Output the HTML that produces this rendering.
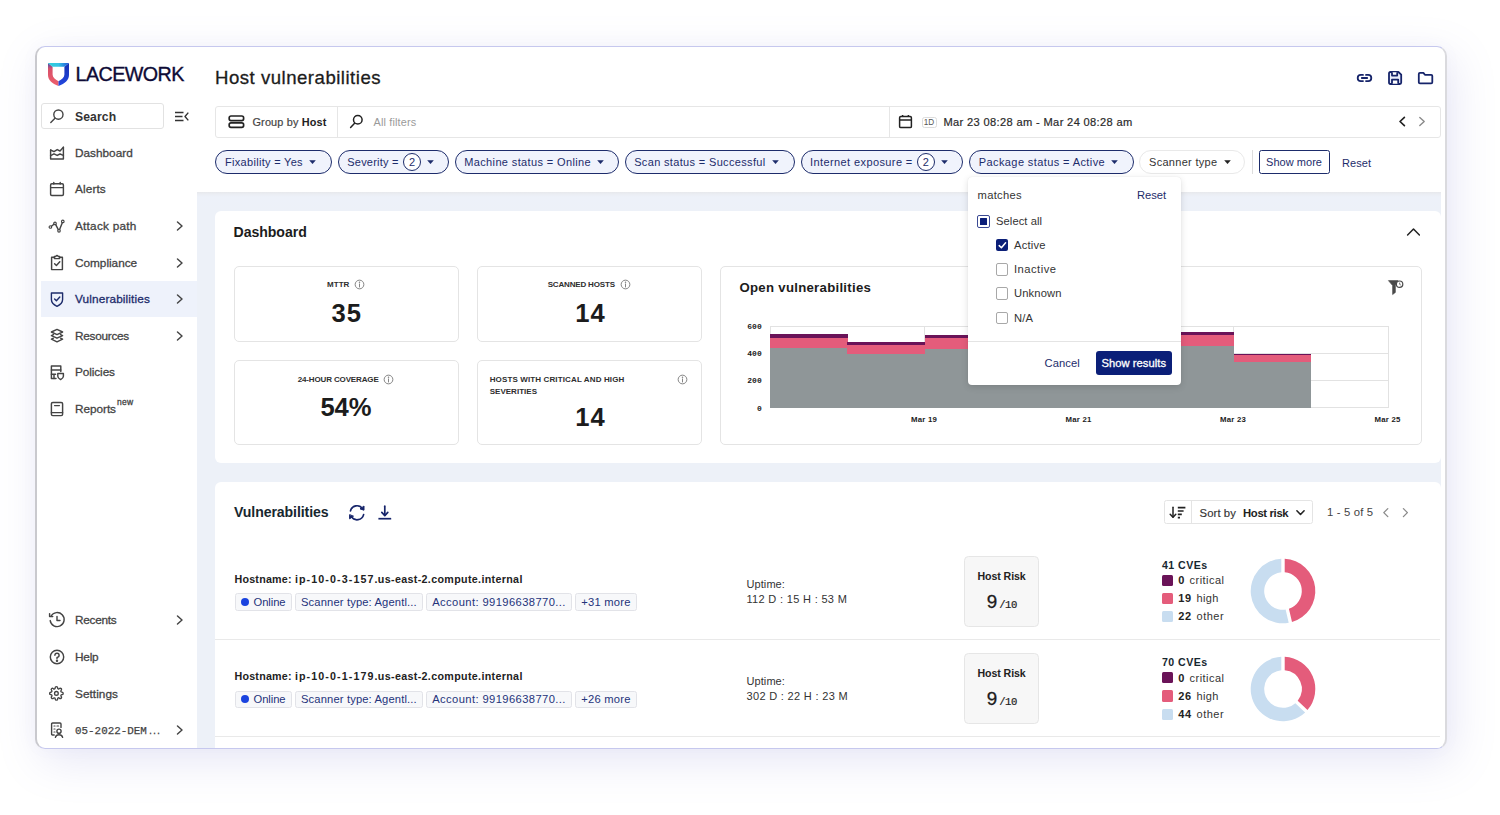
<!DOCTYPE html>
<html lang="en">
<head>
<meta charset="utf-8">
<title>Host vulnerabilities</title>
<style>
*{box-sizing:border-box;margin:0;padding:0}
html,body{width:1500px;height:815px;overflow:hidden;background:#fff}
body{font-family:"Liberation Sans",sans-serif;color:#222;position:relative;-webkit-font-smoothing:antialiased}
.abs{position:absolute}
.t{position:absolute;white-space:nowrap;line-height:1}
#frame{position:absolute;left:35px;top:46px;width:1412px;height:703px;border:1px solid #c6c8ee;border-left:2px solid #c9c9ce;border-right:2px solid #dadade;border-radius:10px;background:#fff;box-shadow:6px 12px 44px rgba(125,130,205,.19),0 0 16px rgba(125,130,205,.04);overflow:hidden}
/* everything inside frame is positioned in page coords via inner offset */
#in{position:absolute;left:-37px;top:-47px;width:1500px;height:815px}
#mainbg{left:197px;top:192px;width:1243.5px;height:560px;background:linear-gradient(to bottom,#e7e8ec 0,#ebeef4 2.5px,#edf1f9 5px,#edf1f8 20px)}
.card{position:absolute;background:#fff;border-radius:6px}
.box{position:absolute;border:1px solid #e4e4e4;border-radius:5px;background:#fff}
.nav{position:absolute;left:75px;font-size:11.8px;color:#444;-webkit-text-stroke:.3px #444;white-space:nowrap;line-height:14px;letter-spacing:.05px}
.chip{position:absolute;top:150px;height:24px;border:1px solid #1d2c6b;border-radius:12px;background:#f0f3fc;color:#1d2c6b;font-size:11px;line-height:22px;white-space:nowrap;letter-spacing:.3px}
.ico{position:absolute;overflow:visible}
</style>
</head>
<body>
<div id="frame"><div id="in">
<!-- SIDEBAR -->
<div id="sidebar">
<!-- logo -->
<svg class="ico" style="left:47px;top:62px" width="23" height="25" viewBox="0 0 23 25">
<defs>
<linearGradient id="lgL" x1="0" y1="0" x2="0" y2="1"><stop offset="0" stop-color="#3a4fb5"/><stop offset=".25" stop-color="#d8506a"/><stop offset="1" stop-color="#ee5f6c"/></linearGradient>
<linearGradient id="lgT" x1="0" y1="0" x2="1" y2="0"><stop offset="0" stop-color="#2fd0d8"/><stop offset=".5" stop-color="#35c3e6"/><stop offset="1" stop-color="#1f55d8"/></linearGradient>
<linearGradient id="lgR" x1="0" y1="0" x2="0" y2="1"><stop offset="0" stop-color="#1630b0"/><stop offset="1" stop-color="#2348e0"/></linearGradient>
</defs>
<path d="M1 1 L5.6 4.7 L5.6 12.6 C5.6 15.6 8 17.6 11.5 19.2 L11.5 24 C5 21.5 1 18 1 13 Z" fill="url(#lgL)"/>
<path d="M22 1 L17.4 4.7 L17.4 12.6 C17.4 15.6 15 17.6 11.5 19.2 L11.5 24 C18 21.5 22 18 22 13 Z" fill="url(#lgR)"/>
<path d="M1 1 L22 1 L17.4 4.7 L5.6 4.7 Z" fill="url(#lgT)"/>
</svg>
<div class="t" style="left:75.5px;top:64px;font-size:19.7px;letter-spacing:-.55px;color:#0e0b36;-webkit-text-stroke:.35px #0e0b36;line-height:20px">LACEWORK</div>
<!-- search -->
<div class="abs" style="left:41px;top:103px;width:123px;height:26px;border:1px solid #e2e2e2;border-radius:3px;background:#fff"></div>
<svg class="ico" style="left:49px;top:108px" width="16" height="16" viewBox="0 0 16 16" fill="none" stroke="#444" stroke-width="1.4" stroke-linecap="round"><circle cx="9.4" cy="6.6" r="4.6"/><path d="M6 10.2 L1.8 14.4"/></svg>
<div class="t" style="left:75px;top:110px;font-size:12.2px;font-weight:bold;color:#333;letter-spacing:.1px;line-height:14px">Search</div>
<svg class="ico" style="left:174px;top:111px" width="16" height="11" viewBox="0 0 16 11" fill="none" stroke="#333" stroke-width="1.4"><path d="M1 1.5 H9.5 M1 5.5 H8.5 M1 9.5 H9.5"/><path d="M14.3 1.6 L11 5.5 L14.3 9.4" stroke-linejoin="round"/></svg>
<!-- active bg -->
<div class="abs" style="left:41px;top:281px;width:156px;height:36px;background:#eef2fb"></div>
<!-- nav labels -->
<div class="nav" id="nav0" style="top:146px;letter-spacing:-0.0px">Dashboard</div>
<div class="nav" id="nav1" style="top:182px;letter-spacing:0.11px">Alerts</div>
<div class="nav" id="nav2" style="top:219px;letter-spacing:0.23px">Attack path</div>
<div class="nav" id="nav3" style="top:256px;letter-spacing:-0.02px">Compliance</div>
<div class="nav" id="nav4" style="top:292px;color:#1d2c6b;-webkit-text-stroke:.3px #1d2c6b;letter-spacing:0.13px">Vulnerabilities</div>
<div class="nav" id="nav5" style="top:329px;letter-spacing:-0.27px">Resources</div>
<div class="nav" id="nav6" style="top:365px;letter-spacing:-0.09px">Policies</div>
<div class="nav" style="top:402px"><span id="nav7" style="letter-spacing:-0.05px">Reports</span><span style="font-size:8.5px;position:relative;top:-8px;left:1px;letter-spacing:.3px">new</span></div>
<div class="nav" id="nav8" style="top:613px;letter-spacing:-0.27px">Recents</div>
<div class="nav" id="nav9" style="top:650px;letter-spacing:-0.22px">Help</div>
<div class="nav" id="nav10" style="top:687px;letter-spacing:.05px">Settings</div>
<div class="nav" id="acct" style="top:723px;font-family:'Liberation Mono',monospace;font-size:10.9px;letter-spacing:0px;-webkit-text-stroke:.25px #444">05-2022-DEM<span style="font-family:'Liberation Sans',sans-serif;letter-spacing:1px;margin-left:2px">...</span></div>
<!-- chevrons -->
<svg class="ico" style="left:176px;top:221px" width="8" height="10" viewBox="0 0 8 10" fill="none" stroke="#444" stroke-width="1.5" stroke-linecap="round" stroke-linejoin="round"><path d="M1.5 1 L6 5 L1.5 9"/></svg>
<svg class="ico" style="left:176px;top:257.5px" width="8" height="10" viewBox="0 0 8 10" fill="none" stroke="#444" stroke-width="1.5" stroke-linecap="round" stroke-linejoin="round"><path d="M1.5 1 L6 5 L1.5 9"/></svg>
<svg class="ico" style="left:176px;top:294px" width="8" height="10" viewBox="0 0 8 10" fill="none" stroke="#444" stroke-width="1.5" stroke-linecap="round" stroke-linejoin="round"><path d="M1.5 1 L6 5 L1.5 9"/></svg>
<svg class="ico" style="left:176px;top:330.5px" width="8" height="10" viewBox="0 0 8 10" fill="none" stroke="#444" stroke-width="1.5" stroke-linecap="round" stroke-linejoin="round"><path d="M1.5 1 L6 5 L1.5 9"/></svg>
<svg class="ico" style="left:176px;top:615px" width="8" height="10" viewBox="0 0 8 10" fill="none" stroke="#444" stroke-width="1.5" stroke-linecap="round" stroke-linejoin="round"><path d="M1.5 1 L6 5 L1.5 9"/></svg>
<svg class="ico" style="left:176px;top:724.5px" width="8" height="10" viewBox="0 0 8 10" fill="none" stroke="#444" stroke-width="1.5" stroke-linecap="round" stroke-linejoin="round"><path d="M1.5 1 L6 5 L1.5 9"/></svg>

<!-- nav icons -->

<svg class="ico" style="left:49px;top:145px" width="16" height="16" viewBox="0 0 16 16" fill="none" stroke="#444" stroke-width="1.45" stroke-linecap="round" stroke-linejoin="round"><path d="M1.6 5 V14 H14.4 V2.2"/><path d="M1.6 5 L5 6.6 L8.2 4.6 L11 6 L14.4 2.2"/><path d="M1.6 10.6 L5 8.8 L8.2 10.4 L11 9 L14.4 10.4"/></svg>
<svg class="ico" style="left:49px;top:181px" width="16" height="16" viewBox="0 0 16 16" fill="none" stroke="#444" stroke-width="1.45" stroke-linecap="round" stroke-linejoin="round"><rect x="1.6" y="2.8" width="12.8" height="11.6" rx="1.2"/><path d="M1.6 6.6 H14.4 M4.8 1.4 V3 M11.2 1.4 V3"/></svg>
<svg class="ico" style="left:48px;top:218px" width="18" height="16" viewBox="0 0 18 16" fill="none" stroke="#444" stroke-width="1.45" stroke-linecap="round" stroke-linejoin="round"><circle cx="2.4" cy="9" r="1.3" stroke-width="1.1"/><circle cx="7" cy="5.4" r="1.3" stroke-width="1.1"/><circle cx="11" cy="12.8" r="1.3" stroke-width="1.1"/><circle cx="14.8" cy="3.4" r="1.3" stroke-width="1.1"/><path d="M3.5 8.2 L5.9 6.2 M7.7 6.6 L10.3 11.6 M11.6 11.6 L14.3 4.7"/></svg>
<svg class="ico" style="left:49px;top:254px" width="16" height="17" viewBox="0 0 16 17" fill="none" stroke="#444" stroke-width="1.45" stroke-linecap="round" stroke-linejoin="round"><path d="M5.4 3.2 H2.6 V15.6 H13.4 V3.2 H10.6"/><path d="M5.4 4.6 V2.4 H6.8 Q8 0.4 9.2 2.4 H10.6 V4.6 Z"/><path d="M5.6 9.8 L7.4 11.6 L10.8 7.8"/></svg>
<svg class="ico" style="left:49px;top:291px" width="16" height="17" viewBox="0 0 16 17" fill="none" stroke="#1d2c6b" stroke-width="1.4" stroke-linecap="round" stroke-linejoin="round"><path d="M2.4 2 H13.6 V8.6 C13.6 12 11 14 8 15.4 C5 14 2.4 12 2.4 8.6 Z"/><path d="M5.6 8 L7.4 9.8 L10.8 6"/></svg>
<svg class="ico" style="left:49px;top:328px" width="16" height="16" viewBox="0 0 16 16" fill="none" stroke="#444" stroke-width="1.45" stroke-linecap="round" stroke-linejoin="round"><path d="M8 1.4 L13.6 4 L8 6.6 L2.4 4 Z"/><path d="M4.4 6.6 L2.4 7.6 L8 10.2 L13.6 7.6 L11.6 6.6"/><path d="M4.4 10.2 L2.4 11.2 L8 13.8 L13.6 11.2 L11.6 10.2"/></svg>
<svg class="ico" style="left:49px;top:364px" width="16" height="17" viewBox="0 0 16 17" fill="none" stroke="#444" stroke-width="1.45" stroke-linecap="round" stroke-linejoin="round"><path d="M7 14.4 H2.4 V2 H11.8 V7.4"/><path d="M2.4 6 H11.8 M2.4 10.2 H6.6 M5 10.2 V14.4"/><path d="M8.8 9.4 H14.4 V12.2 C14.4 13.8 13 14.8 11.6 15.6 C10.2 14.8 8.8 13.8 8.8 12.2 Z"/></svg>
<svg class="ico" style="left:49px;top:401px" width="16" height="16" viewBox="0 0 16 16" fill="none" stroke="#444" stroke-width="1.45" stroke-linecap="round" stroke-linejoin="round"><rect x="2.4" y="1.4" width="11.2" height="13.2" rx="1.4"/><path d="M2.4 11.6 H13.6 M5.6 4.6 H10.4"/></svg>
<svg class="ico" style="left:48px;top:611px" width="18" height="18" viewBox="0 0 18 18" fill="none" stroke="#444" stroke-width="1.45" stroke-linecap="round" stroke-linejoin="round"><path d="M3 5.2 A7 7 0 1 1 2.2 9.6"/><path d="M1.6 2.6 V5.6 H4.8"/><path d="M9 5.4 V9.4 H12"/></svg>
<svg class="ico" style="left:48px;top:648px" width="18" height="18" viewBox="0 0 18 18" fill="none" stroke="#444" stroke-width="1.45" stroke-linecap="round" stroke-linejoin="round"><circle cx="9" cy="9" r="6.7"/><path d="M6.9 7.2 A2.1 2.1 0 1 1 9 9.4 V10.6"/><circle cx="9" cy="12.8" r=".5" fill="#444"/></svg>
<svg class="ico" style="left:49.3px;top:686.2px" width="14.8" height="14.8" viewBox="0 0 24 24" fill="none" stroke="#444" stroke-width="2.2" stroke-linecap="round" stroke-linejoin="round"><circle cx="12" cy="12" r="3"/><path d="M19.4 15a1.65 1.65 0 0 0 .33 1.82l.06.06a2 2 0 1 1-2.83 2.83l-.06-.06a1.65 1.65 0 0 0-1.82-.33 1.65 1.65 0 0 0-1 1.51V21a2 2 0 0 1-4 0v-.09A1.65 1.65 0 0 0 9 19.4a1.65 1.65 0 0 0-1.82.33l-.06.06a2 2 0 1 1-2.83-2.83l.06-.06a1.65 1.65 0 0 0 .33-1.82 1.65 1.65 0 0 0-1.51-1H3a2 2 0 0 1 0-4h.09A1.65 1.65 0 0 0 4.6 9a1.65 1.65 0 0 0-.33-1.82l-.06-.06a2 2 0 1 1 2.83-2.83l.06.06a1.65 1.65 0 0 0 1.82.33H9a1.65 1.65 0 0 0 1-1.51V3a2 2 0 0 1 4 0v.09a1.65 1.65 0 0 0 1 1.51 1.65 1.65 0 0 0 1.82-.33l.06-.06a2 2 0 1 1 2.83 2.83l-.06.06a1.65 1.65 0 0 0-.33 1.82V9a1.65 1.65 0 0 0 1.51 1H21a2 2 0 0 1 0 4h-.09a1.65 1.65 0 0 0-1.51 1z"/></svg>
<svg class="ico" style="left:49px;top:721px" width="16" height="18" viewBox="0 0 16 18" fill="none" stroke="#444" stroke-width="1.4" stroke-linecap="round" stroke-linejoin="round"><path d="M5.2 14 H3.6 Q2.6 14 2.6 13 V3 Q2.6 2 3.6 2 H11 Q12 2 12 3 V6.4"/><path d="M5 5 H6 M8 5 H9.6 M5 8 H6 M5 11 H6" stroke-width="1.2"/><circle cx="10" cy="10.2" r="2.1"/><path d="M6.4 16.4 C7.2 12.8 12.8 12.8 13.6 16.4"/></svg>

</div>
<!-- HEADER -->
<div id="header">
<div class="t" id="title" style="left:215px;top:68px;font-size:18.6px;line-height:20px;color:#1c1c1c;-webkit-text-stroke:.3px #1c1c1c;letter-spacing:.5px">Host vulnerabilities</div>
<!-- top-right icons -->
<svg class="ico" style="left:1356.3px;top:72px" width="17" height="12" viewBox="0 0 17 12" fill="none" stroke="#16246a" stroke-width="1.8" stroke-linecap="round"><path d="M7 2.9 H4.8 A3.1 3.1 0 0 0 4.8 9.1 H7"/><path d="M10 2.9 H12.2 A3.1 3.1 0 0 1 12.2 9.1 H10"/><path d="M5.8 6 H11.2"/></svg>
<svg class="ico" style="left:1387px;top:70px" width="16" height="16" viewBox="0 0 16 16" fill="#e9ecfa" stroke="#16246a" stroke-width="1.8" stroke-linejoin="round"><path d="M3.4 2 H11.4 L14.2 4.6 V12.6 Q14.2 14 12.8 14 H3.4 Q2 14 2 12.6 V3.4 Q2 2 3.4 2 Z"/><path d="M5 2.2 V5.6 H10.2 V2.2" fill="#fff"/><path d="M5 13.8 V9.6 H11.2 V13.8" fill="#fff"/></svg>
<svg class="ico" style="left:1417px;top:71px" width="17" height="14" viewBox="0 0 17 14" fill="none" stroke="#16246a" stroke-width="1.8" stroke-linejoin="round"><path d="M1.8 3 Q1.8 1.9 2.9 1.9 H6.4 L7.9 3.8 H14.2 Q15.3 3.8 15.3 4.9 V11.2 Q15.3 12.3 14.2 12.3 H2.9 Q1.8 12.3 1.8 11.2 Z"/></svg>
<!-- filter bar -->
<div class="abs" style="left:215px;top:106px;width:1225.5px;height:31.5px;border:1px solid #e6e6e6;border-radius:3px;background:#fff"></div>
<div class="abs" style="left:337px;top:106px;width:1px;height:31px;background:#e6e6e6"></div>
<div class="abs" style="left:889px;top:106px;width:1px;height:31px;background:#e6e6e6"></div>
<svg class="ico" style="left:227.8px;top:115px" width="17" height="14" viewBox="0 0 17 14" fill="none" stroke="#222" stroke-width="1.7"><rect x="1.2" y="1" width="14.4" height="4.6" rx="1.8"/><rect x="1.2" y="7.8" width="14.4" height="4.6" rx="1.8"/></svg>
<div class="t" id="groupby" style="letter-spacing:0.15px;left:252.5px;top:115.5px;font-size:10.9px;line-height:13px;color:#444;-webkit-text-stroke:.2px #444">Group by <b style="color:#222;-webkit-text-stroke:0">Host</b></div>
<svg class="ico" style="left:349px;top:114px" width="15" height="15" viewBox="0 0 15 15" fill="none" stroke="#222" stroke-width="1.5" stroke-linecap="round"><circle cx="8.8" cy="5.8" r="4.3"/><path d="M5.6 9.2 L1.6 13.4"/></svg>
<div class="t" id="allf" style="left:373.5px;top:116px;font-size:10.9px;line-height:13px;color:#9a9a9a;letter-spacing:.15px">All filters</div>
<svg class="ico" style="left:898px;top:114px" width="15" height="15" viewBox="0 0 15 15" fill="none" stroke="#222" stroke-width="1.5" stroke-linejoin="round"><rect x="1.6" y="2.6" width="11.8" height="11" rx="1.2"/><path d="M1.6 6 H13.4 M4.6 1 V3 M10.4 1 V3"/></svg>
<div class="abs" style="left:921.5px;top:116.5px;width:15px;height:11px;border:1px solid #dcdcdc;border-radius:2.5px;font-size:8.2px;line-height:9.5px;text-align:center;color:#555;letter-spacing:0px">1D</div>
<div class="t" id="daterange" style="left:943.5px;top:115.6px;font-size:11.1px;line-height:13px;color:#2a2a2a;-webkit-text-stroke:.2px #2a2a2a;letter-spacing:.35px">Mar 23 08:28 am - Mar 24 08:28 am</div>
<svg class="ico" style="left:1398px;top:116px" width="8" height="11" viewBox="0 0 8 11" fill="none" stroke="#222" stroke-width="1.7" stroke-linecap="round" stroke-linejoin="round"><path d="M6.4 1.4 L2 5.5 L6.4 9.6"/></svg>
<svg class="ico" style="left:1418px;top:116px" width="8" height="11" viewBox="0 0 8 11" fill="none" stroke="#8a8a8a" stroke-width="1.4" stroke-linecap="round" stroke-linejoin="round"><path d="M1.8 1.4 L6.2 5.5 L1.8 9.6"/></svg>
<!-- chips -->
<div class="chip" style="left:215px;width:117px"><span class="t" id="c1" style="left:9.0px;top:5px;line-height:12px">Fixability = Yes</span></div><svg class="ico" style="left:309.2px;top:160px" width="7" height="4.5" viewBox="0 0 7 4.5"><path d="M0.7 0.5 H6.3 L3.5 3.8 Z" fill="#1d2c6b" stroke="#1d2c6b" stroke-width=".5" stroke-linejoin="round"/></svg>
<div class="chip" style="left:337.8px;width:111.2px"><span class="t" id="c2" style="letter-spacing:0.2px;left:8.5px;top:5px;line-height:12px">Severity =</span></div><svg class="ico" style="left:426.5px;top:160px" width="7" height="4.5" viewBox="0 0 7 4.5"><path d="M0.7 0.5 H6.3 L3.5 3.8 Z" fill="#1d2c6b" stroke="#1d2c6b" stroke-width=".5" stroke-linejoin="round"/></svg>
<div class="chip" style="left:454.7px;width:164px"><span class="t" id="c3" style="letter-spacing:0.37px;left:8.5px;top:5px;line-height:12px">Machine status = Online</span></div><svg class="ico" style="left:596.5px;top:160px" width="7" height="4.5" viewBox="0 0 7 4.5"><path d="M0.7 0.5 H6.3 L3.5 3.8 Z" fill="#1d2c6b" stroke="#1d2c6b" stroke-width=".5" stroke-linejoin="round"/></svg>
<div class="chip" style="left:624.7px;width:170px"><span class="t" id="c4" style="letter-spacing:0.34px;left:8.5px;top:5px;line-height:12px">Scan status = Successful</span></div><svg class="ico" style="left:772.0px;top:160px" width="7" height="4.5" viewBox="0 0 7 4.5"><path d="M0.7 0.5 H6.3 L3.5 3.8 Z" fill="#1d2c6b" stroke="#1d2c6b" stroke-width=".5" stroke-linejoin="round"/></svg>
<div class="chip" style="left:800.5px;width:162.3px"><span class="t" id="c5" style="letter-spacing:0.4px;left:8.5px;top:5px;line-height:12px">Internet exposure =</span></div><svg class="ico" style="left:940.6px;top:160px" width="7" height="4.5" viewBox="0 0 7 4.5"><path d="M0.7 0.5 H6.3 L3.5 3.8 Z" fill="#1d2c6b" stroke="#1d2c6b" stroke-width=".5" stroke-linejoin="round"/></svg>
<div class="chip" style="left:968.8px;width:164.8px"><span class="t" id="c6" style="letter-spacing:0.4px;left:9px;top:5px;line-height:12px">Package status = Active</span></div><svg class="ico" style="left:1111.1px;top:160px" width="7" height="4.5" viewBox="0 0 7 4.5"><path d="M0.7 0.5 H6.3 L3.5 3.8 Z" fill="#1d2c6b" stroke="#1d2c6b" stroke-width=".5" stroke-linejoin="round"/></svg>
<div class="abs" style="left:403px;top:153px;width:18px;height:18px;border:1px solid #1d2c6b;border-radius:9px;background:#fff;color:#1d2c6b;font-size:11px;line-height:16px;text-align:center">2</div>
<div class="abs" style="left:916.8px;top:153px;width:18px;height:18px;border:1px solid #1d2c6b;border-radius:9px;background:#fff;color:#1d2c6b;font-size:11px;line-height:16px;text-align:center">2</div>
<div class="chip" style="left:1139px;width:106px;background:#fff;border-color:#e9e9e9;color:#333"><span class="t" id="c7" style="left:9px;top:5px;line-height:12px">Scanner type</span></div><svg class="ico" style="left:1223.5px;top:160px" width="7" height="4.5" viewBox="0 0 7 4.5"><path d="M0.7 0.5 H6.3 L3.5 3.8 Z" fill="#222" stroke="#222" stroke-width=".5" stroke-linejoin="round"/></svg>
<div class="abs" style="left:1252px;top:150px;width:1px;height:24px;background:#ddd"></div>
<div class="abs" style="left:1258.5px;top:150px;width:71px;height:24px;border:1px solid #1d2c6b;border-radius:2.5px;background:#fff"></div><div class="t" id="showmore" style="left:1266px;top:156px;font-size:11px;line-height:12px;color:#1d2c6b;letter-spacing:0.04px">Show more</div>
<div class="t" id="reset1" style="left:1342px;top:157px;font-size:11px;line-height:12px;color:#1d2c6b;letter-spacing:0.06px">Reset</div>

</div>
<div class="abs" id="mainbg"></div>
<!-- DASHBOARD CARD -->
<div class="card" id="dash" style="left:215px;top:211px;width:1225.5px;height:252px"></div>
<div id="dashc">
<div class="t" id="dtitle" style="left:233.5px;top:224px;font-size:14.1px;font-weight:bold;color:#1c1c1c;line-height:16px;letter-spacing:-0.04px">Dashboard</div>
<svg class="ico" style="left:1406px;top:227px" width="15" height="10" viewBox="0 0 15 10" fill="none" stroke="#222" stroke-width="1.5" stroke-linecap="round" stroke-linejoin="round"><path d="M1.6 8 L7.5 2 L13.4 8"/></svg>
<div class="box" style="left:233.5px;top:265.5px;width:225px;height:76px"></div>
<div class="box" style="left:477px;top:265.5px;width:225px;height:76px"></div>
<div class="box" style="left:233.5px;top:360px;width:225px;height:84.5px"></div>
<div class="box" style="left:477px;top:360px;width:225px;height:84.5px"></div>
<div class="box" style="left:720px;top:265.5px;width:702px;height:179px"></div>
<div class="t" id="l1" style="left:327.1px;top:280.3px;font-size:8px;font-weight:bold;color:#2e2e2e;letter-spacing:0.02px;line-height:10px">MTTR</div><svg class="ico" style="left:353.5px;top:279.2px" width="11" height="11" viewBox="0 0 11 11" fill="none" stroke="#777" stroke-width=".9"><circle cx="5.5" cy="5.5" r="4.35"/><path d="M5.5 4.9 V8" stroke-linecap="round"/><circle cx="5.5" cy="3.2" r=".35" fill="#777"/></svg>
<div class="t" id="n1" style="left:331.6px;top:300.0px;font-size:25.6px;font-weight:bold;color:#1c1c1c;line-height:26px;letter-spacing:1px">35</div>
<div class="t" id="l2" style="left:547.7px;top:280.3px;font-size:8px;font-weight:bold;color:#2e2e2e;letter-spacing:-0.17px;line-height:10px">SCANNED HOSTS</div><svg class="ico" style="left:619.5px;top:279.2px" width="11" height="11" viewBox="0 0 11 11" fill="none" stroke="#777" stroke-width=".9"><circle cx="5.5" cy="5.5" r="4.35"/><path d="M5.5 4.9 V8" stroke-linecap="round"/><circle cx="5.5" cy="3.2" r=".35" fill="#777"/></svg>
<div class="t" id="n2" style="left:575.2px;top:300.0px;font-size:25.6px;font-weight:bold;color:#1c1c1c;line-height:26px;letter-spacing:1px">14</div>
<div class="t" id="l3" style="left:297.7px;top:374.6px;font-size:8px;font-weight:bold;color:#2e2e2e;letter-spacing:-0.14px;line-height:10px">24-HOUR COVERAGE</div><svg class="ico" style="left:383.2px;top:373.5px" width="11" height="11" viewBox="0 0 11 11" fill="none" stroke="#777" stroke-width=".9"><circle cx="5.5" cy="5.5" r="4.35"/><path d="M5.5 4.9 V8" stroke-linecap="round"/><circle cx="5.5" cy="3.2" r=".35" fill="#777"/></svg>
<div class="t" id="n3" style="left:320.4px;top:394.3px;font-size:25.6px;font-weight:bold;color:#1c1c1c;line-height:26px;letter-spacing:-0.1px">54%</div>
<div class="t" id="l4" style="left:489.7px;top:374.6px;font-size:8px;font-weight:bold;color:#2e2e2e;letter-spacing:0.13px;line-height:10px">HOSTS WITH CRITICAL AND HIGH</div>
<div class="t" id="l4b" style="left:489.7px;top:386.9px;font-size:8px;font-weight:bold;color:#2e2e2e;letter-spacing:0.02px;line-height:10px">SEVERITIES</div><svg class="ico" style="left:677.2px;top:373.5px" width="11" height="11" viewBox="0 0 11 11" fill="none" stroke="#777" stroke-width=".9"><circle cx="5.5" cy="5.5" r="4.35"/><path d="M5.5 4.9 V8" stroke-linecap="round"/><circle cx="5.5" cy="3.2" r=".35" fill="#777"/></svg>
<div class="t" id="n4" style="left:575.2px;top:403.7px;font-size:25.6px;font-weight:bold;color:#1c1c1c;line-height:26px;letter-spacing:1px">14</div>
<div class="t" id="ovt" style="left:739.5px;top:280px;font-size:13.2px;font-weight:bold;color:#1c1c1c;line-height:15px;letter-spacing:0.28px">Open vulnerabilities</div>
<svg class="ico" style="left:1387px;top:279px" width="18" height="17" viewBox="0 0 18 17"><path d="M1.4 1.6 H11 L8.4 6.6 V13.4 L5.6 15.6 V6.6 Z" fill="#4a4a4a" stroke="#4a4a4a" stroke-width=".6" stroke-linejoin="round"/><circle cx="12.6" cy="5.2" r="3.2" fill="#fff" stroke="#4a4a4a" stroke-width="1.2"/><path d="M12.7 3.6 V5.4 L13.8 6" stroke="#4a4a4a" stroke-width=".8" fill="none"/></svg>
<svg class="ico" id="chart" style="left:720px;top:266px" width="702" height="179" viewBox="720 266 702 179" shape-rendering="crispEdges">
<rect x="770.0" y="326.0" width="618.0" height="81.6" fill="#fff" stroke="#e2e2e2" stroke-width="1"/>
<path d="M770.0 353.4 H1388.0" stroke="#e2e2e2" stroke-width="1"/>
<path d="M770.0 380.3 H1388.0" stroke="#e2e2e2" stroke-width="1"/>
<path d="M924.5 326.0 V407.6" stroke="#e2e2e2" stroke-width="1"/>
<path d="M1079.0 326.0 V407.6" stroke="#e2e2e2" stroke-width="1"/>
<path d="M1233.5 326.0 V407.6" stroke="#e2e2e2" stroke-width="1"/>
<rect x="770.00" y="334.4" width="77.55" height="4.4" fill="#6a1358"/><rect x="770.00" y="338.3" width="77.55" height="10.5" fill="#e45c7b"/><rect x="770.00" y="348.3" width="77.55" height="59.3" fill="#8f9698"/>
<rect x="847.25" y="342" width="77.55" height="3.1" fill="#6a1358"/><rect x="847.25" y="344.6" width="77.55" height="9.4" fill="#e45c7b"/><rect x="847.25" y="353.5" width="77.55" height="54.1" fill="#8f9698"/>
<rect x="924.50" y="334.5" width="77.55" height="4.4" fill="#6a1358"/><rect x="924.50" y="338.4" width="77.55" height="10.7" fill="#e45c7b"/><rect x="924.50" y="348.6" width="77.55" height="59.0" fill="#8f9698"/>
<rect x="1001.75" y="334.5" width="77.55" height="4.4" fill="#6a1358"/><rect x="1001.75" y="338.4" width="77.55" height="10.7" fill="#e45c7b"/><rect x="1001.75" y="348.6" width="77.55" height="59.0" fill="#8f9698"/>
<rect x="1079.00" y="331.6" width="77.55" height="4.0" fill="#6a1358"/><rect x="1079.00" y="335.1" width="77.55" height="11.8" fill="#e45c7b"/><rect x="1079.00" y="346.4" width="77.55" height="61.2" fill="#8f9698"/>
<rect x="1156.25" y="331.6" width="77.55" height="4.0" fill="#6a1358"/><rect x="1156.25" y="335.1" width="77.55" height="11.8" fill="#e45c7b"/><rect x="1156.25" y="346.4" width="77.55" height="61.2" fill="#8f9698"/>
<rect x="1233.50" y="353.6" width="77.55" height="2.3" fill="#6a1358"/><rect x="1233.50" y="355.4" width="77.55" height="6.8" fill="#e45c7b"/><rect x="1233.50" y="361.7" width="77.55" height="45.9" fill="#8f9698"/>
<text x="761.7" y="328.9" text-anchor="end" font-family="Liberation Mono, monospace" font-size="8" font-weight="bold" fill="#222">600</text>
<text x="761.7" y="356.3" text-anchor="end" font-family="Liberation Mono, monospace" font-size="8" font-weight="bold" fill="#222">400</text>
<text x="761.7" y="383.2" text-anchor="end" font-family="Liberation Mono, monospace" font-size="8" font-weight="bold" fill="#222">200</text>
<text x="761.7" y="410.5" text-anchor="end" font-family="Liberation Mono, monospace" font-size="8" font-weight="bold" fill="#222">0</text>
<text x="924.0" y="421.9" text-anchor="middle" font-family="Liberation Sans, sans-serif" font-size="7.8" font-weight="bold" fill="#222" letter-spacing=".2">Mar 19</text>
<text x="1078.5" y="421.9" text-anchor="middle" font-family="Liberation Sans, sans-serif" font-size="7.8" font-weight="bold" fill="#222" letter-spacing=".2">Mar 21</text>
<text x="1233.0" y="421.9" text-anchor="middle" font-family="Liberation Sans, sans-serif" font-size="7.8" font-weight="bold" fill="#222" letter-spacing=".2">Mar 23</text>
<text x="1387.5" y="421.9" text-anchor="middle" font-family="Liberation Sans, sans-serif" font-size="7.8" font-weight="bold" fill="#222" letter-spacing=".2">Mar 25</text>
</svg>
</div>
<!-- VULN CARD -->
<div class="card" id="vuln" style="left:215px;top:482px;width:1225.5px;height:280px;border-radius:6px 6px 0 0"></div>
<div id="vulnc">
<div class="t" id="vtitle" style="left:234px;top:503.5px;font-size:14.1px;font-weight:bold;color:#17272f;line-height:16px;letter-spacing:-0.09px">Vulnerabilities</div>
<svg class="ico" style="left:348px;top:503.5px" width="17" height="17" viewBox="0 0 17 17" fill="none" stroke="#16246a" stroke-width="1.7" stroke-linecap="round" stroke-linejoin="round"><path d="M2.5 6.9 A6.7 6.7 0 0 1 14.6 4.8"/><path d="M15.6 10.6 A6.7 6.7 0 0 1 3.4 12.6"/><path d="M16 2.4 V6.2 L12.4 5 Z" fill="#16246a" stroke-width="1"/><path d="M1.6 11 V14.8 L5.2 12.4 Z" fill="#16246a" stroke-width="1"/></svg>
<svg class="ico" style="left:376.5px;top:504.5px" width="16" height="15" viewBox="0 0 16 15" fill="none" stroke="#16246a" stroke-width="1.7" stroke-linecap="round" stroke-linejoin="round"><path d="M7.8 1.2 V10"/><path d="M4.8 7.4 L7.8 10.6 L10.8 7.4"/><path d="M1.4 13.7 H14.2" stroke-linecap="butt"/></svg>
<!-- sort -->
<div class="abs" style="left:1164px;top:500px;width:148.5px;height:24px;border:1px solid #e4e4e4;border-radius:2.5px;background:#fff"></div>
<div class="abs" style="left:1190.5px;top:500px;width:1px;height:24px;background:#e4e4e4"></div>
<svg class="ico" style="left:1169px;top:506px" width="18" height="13" viewBox="0 0 18 13" fill="none" stroke="#222" stroke-width="1.5" stroke-linecap="round" stroke-linejoin="round"><path d="M4 1.2 V11"/><path d="M1.2 8.2 L4 11.2 L6.8 8.2"/><path d="M8.8 1.6 H16.4 M8.8 5 H14.6 M8.8 8.4 H12.8 M8.8 11.6 H11" stroke-linecap="butt" stroke-width="1.7"/></svg>
<div class="t" id="sortby" style="left:1199.5px;top:506.5px;font-size:11.3px;line-height:13px;color:#333;-webkit-text-stroke:.15px #333;letter-spacing:0.1px">Sort by</div>
<div class="t" id="hostrisk" style="left:1243px;top:506.5px;font-size:11.3px;line-height:13px;color:#222;font-weight:bold;letter-spacing:-0.34px">Host risk</div>
<svg class="ico" style="left:1295px;top:509px" width="11" height="8" viewBox="0 0 11 8" fill="none" stroke="#222" stroke-width="1.6" stroke-linecap="round" stroke-linejoin="round"><path d="M1.9 1.8 L5.5 5.5 L9.1 1.8"/></svg>
<div class="t" id="pager" style="left:1327px;top:506px;font-size:11.3px;line-height:13px;color:#444;letter-spacing:0.16px">1 - 5 of 5</div>
<svg class="ico" style="left:1382px;top:507px" width="7" height="11" viewBox="0 0 7 11" fill="none" stroke="#8a8a8a" stroke-width="1.3" stroke-linecap="round" stroke-linejoin="round"><path d="M5.8 1.6 L1.8 5.6 L5.8 9.6"/></svg>
<svg class="ico" style="left:1401.5px;top:507px" width="7" height="11" viewBox="0 0 7 11" fill="none" stroke="#8a8a8a" stroke-width="1.3" stroke-linecap="round" stroke-linejoin="round"><path d="M1.4 1.6 L5.4 5.6 L1.4 9.6"/></svg>
<div class="t" id="host1" style="left:234.5px;top:573px;font-size:10.7px;line-height:13px;font-weight:bold;color:#222;letter-spacing:.22px">Hostname: <span id="hip1" style="letter-spacing:1.1px">ip-10-0-3-157</span><span id="hrest1" style="letter-spacing:0.34px">.us-east-2.compute.internal</span></div>
<div style="position:absolute;height:17.8px;border:1px solid #e2e3e8;border-radius:2.5px;background:#f7f8fa;left:234.5px;top:593.3px;width:57px"></div><div class="abs" style="left:240.5px;top:598.0px;width:8.2px;height:8.2px;border-radius:5px;background:#1a43df"></div><div class="t" id="on1" style="left:253.5px;top:595.5999999999999px;font-size:11.2px;line-height:13px;color:#24337a;letter-spacing:-0.05px">Online</div>
<div style="position:absolute;height:17.8px;border:1px solid #e2e3e8;border-radius:2.5px;background:#f7f8fa;left:294.5px;top:593.3px;width:128px"></div><div class="t" id="sc1" style="left:301px;top:595.5999999999999px;font-size:11.2px;line-height:13px;color:#24337a;letter-spacing:0.14px">Scanner type: Agentl...</div>
<div style="position:absolute;height:17.8px;border:1px solid #e2e3e8;border-radius:2.5px;background:#f7f8fa;left:426px;top:593.3px;width:145.5px"></div><div class="t" id="ac1" style="left:432.2px;top:595.5999999999999px;font-size:11.2px;line-height:13px;color:#24337a;letter-spacing:0.4px">Account: 99196638770...</div>
<div style="position:absolute;height:17.8px;border:1px solid #e2e3e8;border-radius:2.5px;background:#f7f8fa;left:574.7px;top:593.3px;width:62px"></div><div class="t" id="mo1" style="left:581.3px;top:595.5999999999999px;font-size:11.2px;line-height:13px;color:#24337a;letter-spacing:0.23px">+31 more</div>
<div class="t" id="upl1" style="left:746.5px;top:577.5px;font-size:11px;line-height:13px;color:#333;letter-spacing:0.08px">Uptime:</div>
<div class="t" id="upv1" style="left:746.5px;top:592.5px;font-size:11px;line-height:13px;color:#333;letter-spacing:0.32px">112 D : 15 H : 53 M</div>
<div class="abs" style="left:964px;top:555.7px;width:75px;height:71px;border:1px solid #e6e6e6;border-radius:4.5px;background:#f7f7f7"></div>
<div class="t" id="hr1" style="left:977.5px;top:570px;font-size:10.6px;line-height:13px;font-weight:bold;color:#222;letter-spacing:-0.08px">Host Risk</div>
<div class="t" id="nine1" style="left:986.7px;top:591.7px;font-size:18.8px;line-height:20px;color:#1c1c1c;-webkit-text-stroke:.3px #1c1c1c">9</div>
<div class="t" id="ten1" style="left:999.2px;top:599.7px;font-family:'Liberation Mono',monospace;font-size:10.6px;letter-spacing:-.45px;line-height:11px;color:#222;-webkit-text-stroke:.2px #222">/10</div>
<div class="t" id="cve1" style="left:1162px;top:559px;font-size:10.6px;line-height:12px;font-weight:bold;color:#17272f;letter-spacing:.45px">41 CVEs</div>
<div class="abs" style="left:1161.6px;top:575.0px;width:11.2px;height:11.2px;border-radius:1.5px;background:#6a1358"></div><div class="t" style="left:1178.3px;top:574.2px;font-size:11px;line-height:13px;font-weight:bold;color:#222;letter-spacing:.6px">0</div><div class="t" id="lg10" style="left:1189.6px;top:574.2px;font-size:11px;line-height:13px;color:#333;letter-spacing:0.46px">critical</div>
<div class="abs" style="left:1161.6px;top:593.1px;width:11.2px;height:11.2px;border-radius:1.5px;background:#e45c7b"></div><div class="t" style="left:1178.3px;top:592.3px;font-size:11px;line-height:13px;font-weight:bold;color:#222;letter-spacing:.6px">19</div><div class="t" id="lg11" style="left:1196.6px;top:592.3px;font-size:11px;line-height:13px;color:#333;letter-spacing:.35px">high</div>
<div class="abs" style="left:1161.6px;top:611.2px;width:11.2px;height:11.2px;border-radius:1.5px;background:#c8ddf0"></div><div class="t" style="left:1178.3px;top:610.4px;font-size:11px;line-height:13px;font-weight:bold;color:#222;letter-spacing:.6px">22</div><div class="t" id="lg12" style="left:1196.6px;top:610.4px;font-size:11px;line-height:13px;color:#333;letter-spacing:0.48px">other</div>
<svg class="ico" id="donut1" style="left:1248.6px;top:557px" width="68" height="68" viewBox="1248.6 557 68 68"><path d="M1284.30 558.74 A32.3 32.3 0 0 1 1291.60 622.02 L1288.52 608.84 A18.8 18.8 0 0 0 1284.30 572.28 Z" fill="#e45c7b"/><path d="M1288.29 622.79 A32.3 32.3 0 1 1 1280.90 558.74 L1280.90 572.28 A18.8 18.8 0 1 0 1285.21 609.62 Z" fill="#c8ddf0"/></svg><div class="abs" style="left:215px;top:639px;width:1225px;height:1px;background:#e9e9e9"></div>
<div class="t" id="host2" style="left:234.5px;top:670.3px;font-size:10.7px;line-height:13px;font-weight:bold;color:#222;letter-spacing:.22px">Hostname: <span id="hip2" style="letter-spacing:1.1px">ip-10-0-1-179</span><span id="hrest2" style="letter-spacing:0.34px">.us-east-2.compute.internal</span></div>
<div style="position:absolute;height:17.8px;border:1px solid #e2e3e8;border-radius:2.5px;background:#f7f8fa;left:234.5px;top:690.5999999999999px;width:57px"></div><div class="abs" style="left:240.5px;top:695.3px;width:8.2px;height:8.2px;border-radius:5px;background:#1a43df"></div><div class="t" id="on2" style="left:253.5px;top:692.8999999999999px;font-size:11.2px;line-height:13px;color:#24337a;letter-spacing:-0.05px">Online</div>
<div style="position:absolute;height:17.8px;border:1px solid #e2e3e8;border-radius:2.5px;background:#f7f8fa;left:294.5px;top:690.5999999999999px;width:128px"></div><div class="t" id="sc2" style="left:301px;top:692.8999999999999px;font-size:11.2px;line-height:13px;color:#24337a;letter-spacing:0.14px">Scanner type: Agentl...</div>
<div style="position:absolute;height:17.8px;border:1px solid #e2e3e8;border-radius:2.5px;background:#f7f8fa;left:426px;top:690.5999999999999px;width:145.5px"></div><div class="t" id="ac2" style="left:432.2px;top:692.8999999999999px;font-size:11.2px;line-height:13px;color:#24337a;letter-spacing:0.4px">Account: 99196638770...</div>
<div style="position:absolute;height:17.8px;border:1px solid #e2e3e8;border-radius:2.5px;background:#f7f8fa;left:574.7px;top:690.5999999999999px;width:62px"></div><div class="t" id="mo2" style="left:581.3px;top:692.8999999999999px;font-size:11.2px;line-height:13px;color:#24337a;letter-spacing:0.23px">+26 more</div>
<div class="t" id="upl2" style="left:746.5px;top:674.8px;font-size:11px;line-height:13px;color:#333;letter-spacing:0.08px">Uptime:</div>
<div class="t" id="upv2" style="left:746.5px;top:689.8px;font-size:11px;line-height:13px;color:#333;letter-spacing:0.32px">302 D : 22 H : 23 M</div>
<div class="abs" style="left:964px;top:653.0px;width:75px;height:71px;border:1px solid #e6e6e6;border-radius:4.5px;background:#f7f7f7"></div>
<div class="t" id="hr2" style="left:977.5px;top:667.3px;font-size:10.6px;line-height:13px;font-weight:bold;color:#222;letter-spacing:-0.08px">Host Risk</div>
<div class="t" id="nine2" style="left:986.7px;top:689.0px;font-size:18.8px;line-height:20px;color:#1c1c1c;-webkit-text-stroke:.3px #1c1c1c">9</div>
<div class="t" id="ten2" style="left:999.2px;top:697.0px;font-family:'Liberation Mono',monospace;font-size:10.6px;letter-spacing:-.45px;line-height:11px;color:#222;-webkit-text-stroke:.2px #222">/10</div>
<div class="t" id="cve2" style="left:1162px;top:656.3px;font-size:10.6px;line-height:12px;font-weight:bold;color:#17272f;letter-spacing:.45px">70 CVEs</div>
<div class="abs" style="left:1161.6px;top:672.3px;width:11.2px;height:11.2px;border-radius:1.5px;background:#6a1358"></div><div class="t" style="left:1178.3px;top:671.5px;font-size:11px;line-height:13px;font-weight:bold;color:#222;letter-spacing:.6px">0</div><div class="t" id="lg20" style="left:1189.6px;top:671.5px;font-size:11px;line-height:13px;color:#333;letter-spacing:0.46px">critical</div>
<div class="abs" style="left:1161.6px;top:690.4px;width:11.2px;height:11.2px;border-radius:1.5px;background:#e45c7b"></div><div class="t" style="left:1178.3px;top:689.6px;font-size:11px;line-height:13px;font-weight:bold;color:#222;letter-spacing:.6px">26</div><div class="t" id="lg21" style="left:1196.6px;top:689.6px;font-size:11px;line-height:13px;color:#333;letter-spacing:.35px">high</div>
<div class="abs" style="left:1161.6px;top:708.5px;width:11.2px;height:11.2px;border-radius:1.5px;background:#c8ddf0"></div><div class="t" style="left:1178.3px;top:707.7px;font-size:11px;line-height:13px;font-weight:bold;color:#222;letter-spacing:.6px">44</div><div class="t" id="lg22" style="left:1196.6px;top:707.7px;font-size:11px;line-height:13px;color:#333;letter-spacing:0.48px">other</div>
<svg class="ico" id="donut2" style="left:1248.6px;top:654.5px" width="68" height="68" viewBox="1248.6 654.5 68 68"><path d="M1284.30 656.24 A32.3 32.3 0 0 1 1307.09 709.56 L1297.31 700.21 A18.8 18.8 0 0 0 1284.30 669.78 Z" fill="#e45c7b"/><path d="M1304.74 712.02 A32.3 32.3 0 1 1 1280.90 656.24 L1280.90 669.78 A18.8 18.8 0 1 0 1294.96 702.67 Z" fill="#c8ddf0"/></svg><div class="abs" style="left:215px;top:736.3px;width:1225px;height:1px;background:#e9e9e9"></div>

</div>
<!-- POPUP -->
<div id="popup">
<div class="abs" style="left:968px;top:176.5px;width:213px;height:208px;background:#fff;border-radius:4px;box-shadow:0 2px 7px rgba(0,0,0,.13),0 0 1px rgba(0,0,0,.12)"></div>
<div class="t" id="pmatch" style="left:977.5px;top:189px;font-size:11.2px;line-height:13px;color:#333;letter-spacing:0.32px">matches</div>
<div class="t" id="preset" style="left:1137px;top:189px;font-size:11.2px;line-height:13px;color:#333;letter-spacing:-0.06px;color:#1d2c6b">Reset</div>
<div class="abs" style="left:977px;top:215px;width:12.6px;height:12.6px;border:1px solid #3b4a94;border-radius:2px;background:#fff"></div>
<div class="abs" style="left:980px;top:218px;width:6.6px;height:6.6px;border-radius:.5px;background:#0b1f78"></div>
<div class="t" id="psel" style="left:996px;top:215.4px;font-size:11.2px;line-height:13px;color:#333;letter-spacing:0.07px">Select all</div>
<div class="abs" style="left:995.5px;top:238.8px;width:12.6px;height:12.6px;border-radius:2px;background:#0b1f78"></div>
<svg class="ico" style="left:995.5px;top:238.8px" width="12.6" height="12.6" viewBox="0 0 12.6 12.6" fill="none" stroke="#fff" stroke-width="1.5" stroke-linecap="round" stroke-linejoin="round"><path d="M3.2 6.6 L5.4 8.8 L9.6 3.8"/></svg>
<div class="t" id="pact" style="left:1014px;top:239.2px;font-size:11.2px;line-height:13px;color:#333;letter-spacing:0.2px">Active</div>
<div class="abs" style="left:995.5px;top:263.0px;width:12.6px;height:12.6px;border:1px solid #a8a8a8;border-radius:2px;background:#fff"></div><div class="t" id="pcb0" style="left:1014px;top:263.2px;font-size:11.2px;line-height:13px;color:#333;letter-spacing:0.49px">Inactive</div>
<div class="abs" style="left:995.5px;top:287.2px;width:12.6px;height:12.6px;border:1px solid #a8a8a8;border-radius:2px;background:#fff"></div><div class="t" id="pcb1" style="left:1014px;top:287.4px;font-size:11.2px;line-height:13px;color:#333;letter-spacing:0.14px">Unknown</div>
<div class="abs" style="left:995.5px;top:311.5px;width:12.6px;height:12.6px;border:1px solid #a8a8a8;border-radius:2px;background:#fff"></div><div class="t" id="pcb2" style="left:1014px;top:311.7px;font-size:11.2px;line-height:13px;color:#333;letter-spacing:0.17px">N/A</div>

<div class="abs" style="left:968px;top:341px;width:213px;height:1px;background:#e4e4e4"></div>
<div class="t" id="pcancel" style="left:1044.5px;top:356.5px;font-size:11.2px;line-height:13px;color:#333;letter-spacing:0.07px;color:#1d2c6b">Cancel</div>
<div class="abs" style="left:1095.5px;top:351px;width:76.5px;height:24px;border-radius:3px;background:#0b1f78"></div>
<div class="t" id="pshow" style="left:1101.5px;top:356.5px;font-size:11.2px;line-height:13px;color:#fff;-webkit-text-stroke:.3px #fff;letter-spacing:0.04px">Show results</div>
</div>
</div></div>
</body>
</html>
